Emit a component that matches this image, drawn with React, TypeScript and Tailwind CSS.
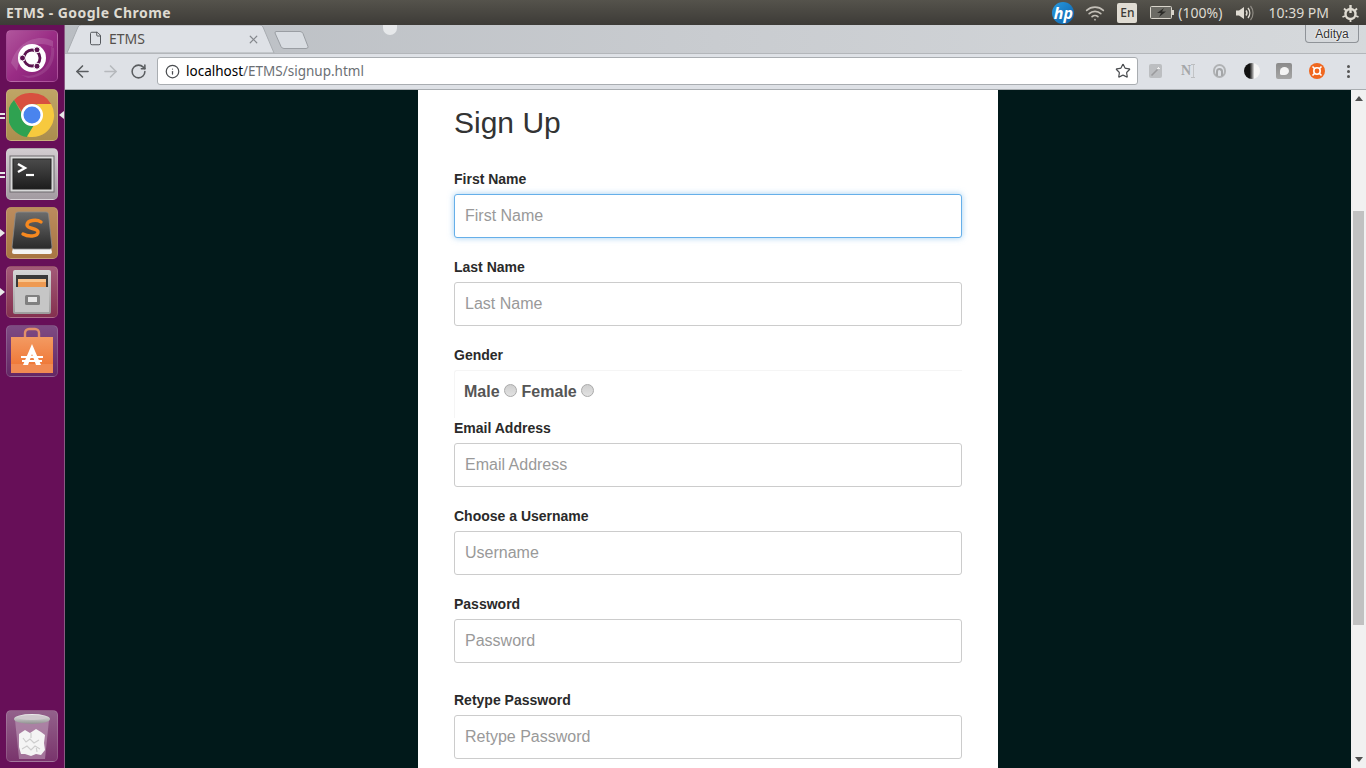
import { ArrowLeft, ArrowRight, File, Info, RotateCw, Star, Wifi, X } from "lucide-react";

const sans = "font-['Liberation_Sans',Arial,sans-serif]";
const ubuntu = "font-['Noto_Sans','Open_Sans',sans-serif]";

function UbuntuLogo() {
  return (
    <svg width="46" height="46" viewBox="0 0 46 46">
      <path d="M2 30C8 8 30 0 44 8v6C28 6 12 14 8 38z" fill="#fff" fillOpacity="0.14" />
      <path d="M12 42c18 4 32-10 30-28l3 1c2 18-10 30-26 30z" fill="#fff" fillOpacity="0.1" />
      <circle cx="23" cy="25" r="14" fill="#fff" />
      <circle cx="23" cy="25" r="8" fill="none" stroke="#5c1450" strokeWidth="2.800" />
      <circle cx="13.500" cy="25" r="3" fill="#5c1450" stroke="#fff" />
      <circle cx="28" cy="16.800" r="3" fill="#5c1450" stroke="#fff" />
      <circle cx="28" cy="33.200" r="3" fill="#5c1450" stroke="#fff" />
    </svg>
  );
}

function ChromeIcon() {
  return (
    <svg width="46" height="46" viewBox="0 0 46 46">
      <path d="M23 1a22 22 0 0 1 19.100 11H23a11 11 0 0 0-10.400 7.300L5 7.900A22 22 0 0 1 23 1z" fill="#d8503f" />
      <path d="M5 7.900l7.800 13.600a10.500 10.500 0 0 0 12 12.400L18 45A22 22 0 0 1 5 7.900z" fill="#2fa251" />
      <path d="M42.100 12A22 22 0 0 1 18 44.500l7-11.500a10.500 10.500 0 0 0 5.500-15.500L28 12z" fill="#f7c93e" />
      <circle cx="23" cy="23" r="11" fill="#fff" />
      <circle cx="23" cy="23" r="8.500" fill="#4a84ee" />
    </svg>
  );
}

function TerminalIcon() {
  return (
    <svg width="46" height="38" viewBox="0 0 46 38">
      <defs>
        <linearGradient id="term" x1="0" y1="0" x2="0" y2="1">
          <stop offset="0" stopColor="#4b4b4b" />
          <stop offset="1" stopColor="#1d1d1d" />
        </linearGradient>
      </defs>
      <rect x="1" y="1" width="44" height="36" fill="#d8d8d8" stroke="#6f6a6e" />
      <rect x="4" y="4" width="38" height="30" fill="url(#term)" stroke="#222" />
      <path d="M9 9l7 4-7 4" fill="none" stroke="#fff" strokeWidth="2.400" />
      <path d="M17 20h8" stroke="#fff" strokeWidth="2.200" />
    </svg>
  );
}

function SublimeIcon() {
  return (
    <svg width="46" height="44" viewBox="0 0 46 44">
      <defs>
        <linearGradient id="key" x1="0" y1="0" x2="0" y2="1">
          <stop offset="0" stopColor="#6c6c6c" />
          <stop offset="0.7" stopColor="#3d3d3d" />
          <stop offset="1" stopColor="#2b2b2b" />
        </linearGradient>
      </defs>
      <path d="M5 33l-2 8q0 2 2 2h36q2 0 2-2l-2-8z" fill="#f4f4f4" />
      <path d="M9 1h28q2 0 2.500 2L43 36q0 2-2 2H5q-2 0-2-2L6.500 3Q7 1 9 1z" fill="url(#key)" stroke="#8a8a8a" strokeWidth="0.800" />
      <path d="M32 11c-4-3-14-2-14 3 0 4 11 3 11 7 0 5-10 5-15 2" fill="none" stroke="#f6881f" strokeWidth="3.400" strokeLinecap="round" />
    </svg>
  );
}

function CabinetIcon() {
  return (
    <svg width="44" height="46" viewBox="0 0 44 46">
      <defs>
        <linearGradient id="cab" x1="0" y1="0" x2="0" y2="1">
          <stop offset="0" stopColor="#d6d6d6" />
          <stop offset="1" stopColor="#9d9d9d" />
        </linearGradient>
      </defs>
      <rect x="3" y="1" width="38" height="44" rx="2" fill="url(#cab)" />
      <rect x="6" y="6" width="32" height="12" fill="#3a3a3a" />
      <rect x="8" y="10" width="28" height="3" fill="#f8c48c" />
      <rect x="8" y="13" width="28" height="5" fill="#ee9a52" />
      <rect x="5" y="18" width="34" height="25" fill="#c6c6c6" />
      <rect x="15" y="26" width="15" height="10" rx="1.500" fill="#808080" />
      <rect x="18" y="28" width="9" height="5" fill="#e6e6e6" />
    </svg>
  );
}

function BagIcon() {
  return (
    <svg width="44" height="48" viewBox="0 0 44 48">
      <defs>
        <linearGradient id="bag" x1="0" y1="0" x2="0" y2="1">
          <stop offset="0" stopColor="#f39a62" />
          <stop offset="0.75" stopColor="#ef7a3a" />
          <stop offset="0.76" stopColor="#f08a52" />
          <stop offset="1" stopColor="#f08a52" />
        </linearGradient>
      </defs>
      <path d="M15 12V6a4 4 0 0 1 4-4h6a4 4 0 0 1 4 4v6" fill="none" stroke="#e2906a" strokeWidth="2.400" />
      <rect x="1" y="10" width="42" height="36" fill="url(#bag)" />
      <path d="M22 17l-9 21h5l4-11 4 11h5z" fill="#fff" />
      <rect x="11" y="29" width="22" height="2" fill="#fff" />
      <rect x="12" y="33" width="20" height="2" fill="#fff" />
    </svg>
  );
}

function TrashIcon() {
  return (
    <svg width="42" height="48" viewBox="0 0 42 48">
      <defs>
        <linearGradient id="rim" x1="0" y1="0" x2="0" y2="1">
          <stop offset="0" stopColor="#f0f0f0" />
          <stop offset="1" stopColor="#8f8f8f" />
        </linearGradient>
      </defs>
      <path d="M4 8l4 39h26l4-39z" fill="#c4a5bf" fillOpacity="0.55" />
      <ellipse cx="21" cy="7" rx="18" ry="5" fill="url(#rim)" />
      <ellipse cx="21" cy="5.500" rx="14" ry="2.500" fill="#cfc8cd" />
      <path d="M8 22l6-4 5 3 6-4 5 3 4 3-1 8 1 7-4 5-5-1-5 2-6-2-4 0-2-7z" fill="#f4f4f4" />
      <path d="M12 26l3 4 4-3 4 4 5-3M11 37l5-3 4 4 4-4 5 3M20 21v5M25 34l1 6" fill="none" stroke="#cdcdcd" strokeWidth="1.200" />
    </svg>
  );
}

function DockTile({ className, children, dash, arrow, active }: { className: string; children: React.ReactNode; dash?: boolean; arrow?: boolean; active?: boolean }) {
  return (
    <div className={`relative w-[52px] h-[52px] rounded-[5px] flex items-center justify-center border border-white/15 ${className}`}>
      {dash && (
        <div className="absolute -left-[7px] top-[23px] flex flex-col gap-[2px]">
          <div className="w-[5px] h-[2px] bg-[#e8e8e8]" />
          <div className="w-[5px] h-[2px] bg-[#e8e8e8]" />
        </div>
      )}
      {arrow && <div className="absolute -left-[7px] top-[21px] w-0 h-0 border-y-[4px] border-y-transparent border-l-[5px] border-l-[#e8e8e8]" />}
      {active && <div className="absolute -right-[7px] top-[21px] w-0 h-0 border-y-[4px] border-y-transparent border-r-[5px] border-r-[#e8e8e8]" />}
      {children}
    </div>
  );
}

function Launcher() {
  return (
    <aside className="w-[65px] shrink-0 bg-[#670f58] border-r border-[#8a5a83] flex flex-col items-start pl-[6px] pt-[5px]">
      <div className="flex flex-col gap-[7px]">
        <DockTile className="bg-gradient-to-br from-[#b0559c] via-[#9a2c85] to-[#7e1c70]">
          <UbuntuLogo />
        </DockTile>
        <DockTile className="bg-gradient-to-b from-[#bfa566] to-[#ab8e4e]" dash active>
          <ChromeIcon />
        </DockTile>
        <DockTile className="bg-gradient-to-b from-[#d2ccd0] to-[#a39ba1]" dash>
          <TerminalIcon />
        </DockTile>
        <DockTile className="bg-gradient-to-b from-[#bb8c5e] to-[#a87542]" arrow>
          <SublimeIcon />
        </DockTile>
        <DockTile className="bg-gradient-to-b from-[#a35a78] to-[#84304f]" arrow>
          <CabinetIcon />
        </DockTile>
        <DockTile className="bg-gradient-to-b from-[#7e4b83] to-[#642765]">
          <BagIcon />
        </DockTile>
      </div>
      <div className="mt-auto mb-[6px]">
        <DockTile className="bg-gradient-to-b from-[#93618b] to-[#79346c]">
          <TrashIcon />
        </DockTile>
      </div>
    </aside>
  );
}

function TopBar() {
  return (
    <header className={`h-[25px] shrink-0 bg-gradient-to-b from-[#55534c] to-[#3d3b37] flex items-center justify-between text-[#dfdbd2] ${ubuntu}`}>
      <span className="pl-[6px] text-[14px] font-bold tracking-[0.45px]">ETMS - Google Chrome</span>
      <div className="flex items-center h-full text-[14px]">
        <div className="w-[22px] h-[22px] rounded-full bg-gradient-to-br from-[#2a9be0] to-[#0b5fa8] flex items-center justify-center">
          <span className="text-white text-[16px] font-bold italic leading-none">hp</span>
        </div>
        <Wifi size={20} className="ml-[11px] text-[#c4c0b8]" />
        <div className="ml-[12px] w-[20px] h-[20px] rounded-[2px] bg-[#e0dcd3] text-[#3c3b37] text-[12px] flex items-center justify-center font-medium">En</div>
        <svg width="24" height="13" viewBox="0 0 24 13" className="ml-[13px]">
          <rect x="0.500" y="0.500" width="21" height="12" rx="1" fill="#6b6a64" stroke="#d8d4cb" />
          <rect x="22" y="4" width="2" height="5" fill="#d8d4cb" />
          <path d="M14 2L7 7h4l-2 4 7-5.500h-4z" fill="#2c2b28" />
        </svg>
        <span className="ml-[4px]">(100%)</span>
        <svg width="19" height="18" viewBox="0 0 19 18" className="ml-[13px]">
          <path d="M1 6.500h3L9 3v12L4 11.500H1z" fill="#dfdbd2" />
          <path d="M11 6.500a4 4 0 0 1 0 5M13 4a8 8 0 0 1 0 10" fill="none" stroke="#dfdbd2" strokeWidth="1.400" />
          <path d="M15.500 2a11 11 0 0 1 0 14" fill="none" stroke="#8f8c85" strokeWidth="1.200" />
        </svg>
        <span className="ml-[14px]">10:39 PM</span>
        <svg width="17" height="18" viewBox="0 0 17 18" className="ml-[13px] mr-[7px]">
          <circle cx="8.500" cy="10" r="5" fill="none" stroke="#dfdbd2" strokeWidth="2.400" />
          <path d="M8.500 1v8" stroke="#dfdbd2" strokeWidth="2.400" />
          <path d="M2 4.500l2 2M15 4.500l-2 2M0.500 13l2.500-1M16.500 13l-2.500-1M8.500 15.500V18" stroke="#dfdbd2" strokeWidth="1.800" />
        </svg>
      </div>
    </header>
  );
}

function TabStrip() {
  return (
    <div className={`relative h-[28px] shrink-0 flex items-end overflow-hidden ${ubuntu}`}>
      <div className="absolute inset-0 bg-gradient-to-r from-[#b9bdc2] via-[#c9ccd0] to-[#d6d9dc]" />
      <div className="absolute left-[318px] top-0 w-[14px] h-[10px] rounded-b-full bg-[#e6e8ea]" />
      <div className="relative ml-[2px] h-[28px] w-[216px]">
        <svg width="216" height="28" viewBox="0 0 216 28" className="absolute inset-0">
          <path d="M0 28L11 2q1-2 3-2h179q2 0 3 2l11 26z" fill="#dee1e6" stroke="#a8acb1" />
        </svg>
        <File size={15} strokeWidth={1.500} className="absolute left-[21px] top-[6px] text-[#4c4f53]" />
        <span className="absolute left-[42px] top-[3px] text-[14px] text-[#55504c]">ETMS</span>
        <X size={13} strokeWidth={2.200} className="absolute left-[180px] top-[8px] text-[#85888d]" />
      </div>
      <svg width="38" height="20" viewBox="0 0 38 20" className="relative mb-[3px] ml-[-10px]">
        <path d="M3 1.500h24q2 0 3 2l5 13q.5 2-2 2H11q-2 0-3-2L2 3q0-1.500 1-1.500z" fill="#d9dde2" stroke="#9a9ea3" />
      </svg>
      <div className={`absolute right-[7px] top-0 h-[18px] w-[54px] rounded-b-[4px] border border-t-0 border-[#8f9398] flex items-center justify-center text-[12px] text-[#333] ${sans}`}>
        <span className="[text-shadow:0_0_2px_#fff,0_0_2px_#fff]">Aditya</span>
      </div>
    </div>
  );
}

function ExtensionIcons() {
  return (
    <div className="flex items-center h-[18px]">
      <div className="ml-[11px] w-[13px] h-[14px] rounded-[2px] bg-[#bcbec1] flex items-center justify-center">
        <svg width="11" height="11" viewBox="0 0 11 11">
          <path d="M1.500 9.500l6-6" stroke="#9a9b9d" strokeWidth="1.600" />
          <path d="M8.500 1v2M7 2.500h3" stroke="#eee" />
        </svg>
      </div>
      <span className="ml-[19px] w-[10px] text-[14px] leading-none font-bold text-[#a4a6a8] font-['Liberation_Serif',serif]">N</span>
      <div className="w-[4px] h-[14px] border-x-0 border-y border-[#bcbec0] flex justify-center">
        <div className="w-px h-full bg-[#c2c4c6]" />
      </div>
      <div className="ml-[18px] w-[13px] h-[14px] rounded-full border-[2px] border-[#b0b2b4] flex items-end justify-center">
        <div className="w-[7px] h-[8px] rounded-t-full border-[2px] border-b-0 border-[#a4a6a8]" />
      </div>
      <div className="ml-[18px] w-[16px] h-[16px] rounded-full bg-gradient-to-r from-[#111] from-35% to-[#f4f4f4] to-65%" />
      <div className="ml-[16px] w-[16px] h-[16px] rounded-[2px] bg-gradient-to-b from-[#8a8a8a] to-[#a6a6a6] flex items-center justify-center">
        <div className="w-[9px] h-[8px] rounded-[50%_50%_50%_20%] bg-[#f4f4f4]" />
      </div>
      <div className="ml-[17px] w-[16px] h-[16px] rounded-full bg-[#f0671f] flex items-center justify-center">
        <svg width="12" height="12" viewBox="0 0 12 12">
          <circle cx="6" cy="6" r="3.200" fill="none" stroke="#fff" strokeWidth="1.600" />
          <path d="M1.500 1.500l2 2M10.500 1.500l-2 2M1.500 10.500l2-2M10.500 10.500l-2-2" stroke="#fff" strokeWidth="1.600" />
        </svg>
      </div>
      <div className="ml-[22px] flex flex-col gap-[2px]">
        <div className="w-[3px] h-[3px] rounded-full bg-[#555]" />
        <div className="w-[3px] h-[3px] rounded-full bg-[#555]" />
        <div className="w-[3px] h-[3px] rounded-full bg-[#555]" />
      </div>
    </div>
  );
}

function Toolbar() {
  return (
    <div className="h-[37px] shrink-0 pb-[1px] bg-[#dee1e6] border-t border-[#b3b6ba] border-b border-b-[#a9adb1] flex items-center">
      <ArrowLeft size={19} strokeWidth={2} className="ml-[8px] text-[#5a5d60]" />
      <ArrowRight size={19} strokeWidth={2} className="ml-[9px] text-[#b6b9bd]" />
      <RotateCw size={17} strokeWidth={2.200} className="ml-[10px] text-[#5a5d60]" />
      <div className="ml-[10px] w-[981px] h-[28px] bg-white rounded-[3px] border border-[#a9adb1] flex items-center">
        <Info size={15} strokeWidth={2} className="ml-[7px] text-[#4a4d50]" />
        <div className={`ml-[6px] text-[13.5px] text-[#6b6f74] ${ubuntu}`}>
          <span className="text-black">localhost</span>/ETMS/signup.html
        </div>
        <Star size={16} strokeWidth={1.800} className="ml-auto mr-[6px] text-[#4a4d50]" />
      </div>
      <ExtensionIcons />
    </div>
  );
}

function Field({ label, placeholder, focused, className = "" }: { label: string; placeholder: string; focused?: boolean; className?: string }) {
  return (
    <div className={className}>
      <label className="block h-[20px] mb-[5px] text-[14px] leading-[20px] font-bold text-[#2a2a2a]">{label}</label>
      <input
        readOnly
        placeholder={placeholder}
        className={`block w-full h-[44px] px-[10px] rounded-[3px] bg-white text-[16px] placeholder:text-[#999] outline-none border ${focused ? "border-[#66afe9] shadow-[0_0_6px_rgba(102,175,233,0.6)]" : "border-[#ccc]"}`}
      />
    </div>
  );
}

function SignUpForm() {
  return (
    <div className={`w-[580px] bg-white px-[36px] ${sans} h-full`}>
      <h1 className="pt-[13px] h-[79px] text-[30px] leading-[39px] text-[#333]">Sign Up</h1>
      <Field label="First Name" placeholder="First Name" focused />
      <Field label="Last Name" placeholder="Last Name" className="mt-[19px]" />
      <div className="mt-[19px]">
        <div className="h-[20px] text-[14px] leading-[20px] font-bold text-[#2a2a2a]">Gender</div>
        <div className="mt-[5px] h-[48px] border-t border-l border-[#f5f5f5] rounded-tl-[3px] pl-[9px] pt-[11px] flex items-start text-[16px] leading-[20px] font-bold text-[#555]">
          <span>Male</span>
          <span className="ml-[4px] mt-[2px] w-[13px] h-[13px] rounded-full border border-[#aaa] bg-gradient-to-b from-[#cfcfcf] to-[#e2e2e2]" />
          <span className="ml-[5px]">Female</span>
          <span className="ml-[4px] mt-[2px] w-[13px] h-[13px] rounded-full border border-[#aaa] bg-gradient-to-b from-[#cfcfcf] to-[#e2e2e2]" />
        </div>
      </div>
      <Field label="Email Address" placeholder="Email Address" />
      <Field label="Choose a Username" placeholder="Username" className="mt-[19px]" />
      <Field label="Password" placeholder="Password" className="mt-[19px]" />
      <Field label="Retype Password" placeholder="Retype Password" className="mt-[27px]" />
    </div>
  );
}

function Scrollbar() {
  return (
    <div className="w-[15px] shrink-0 bg-[#f1f1f1] flex flex-col items-center">
      <div className="mt-[6px] w-0 h-0 border-x-[4px] border-x-transparent border-b-[5px] border-b-[#505050]" />
      <div className="mt-[110px] w-[11px] h-[414px] bg-[#c1c1c1]" />
      <div className="mt-auto mb-[6px] w-0 h-0 border-x-[4px] border-x-transparent border-t-[5px] border-t-[#505050]" />
    </div>
  );
}

export default function App() {
  return (
    <div className="w-[1366px] h-[768px] overflow-hidden flex flex-col">
      <TopBar />
      <div className="flex flex-1 min-h-0">
        <Launcher />
        <main className="flex-1 min-w-0 flex flex-col">
          <TabStrip />
          <Toolbar />
          <div className="flex-1 min-h-0 flex overflow-hidden">
            <div className="flex-1 bg-[#01191a] flex justify-center">
              <SignUpForm />
            </div>
            <Scrollbar />
          </div>
        </main>
      </div>
    </div>
  );
}
